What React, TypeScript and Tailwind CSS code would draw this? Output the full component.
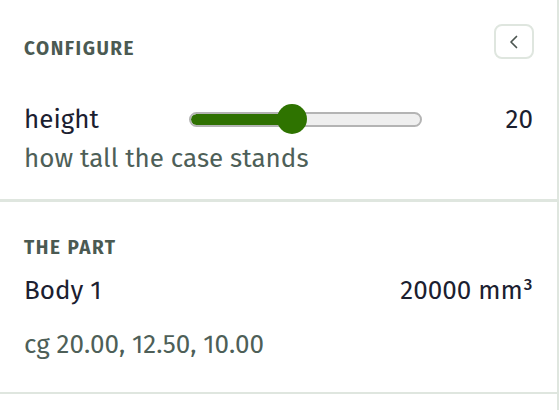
import React from 'react';

const font = { fontFamily: '"Fira Sans", "Open Sans", "Noto Sans", sans-serif' };

const Slider: React.FC<{ pct: number }> = ({ pct }) => {
  return (
    <div className="relative w-[233px] h-[30px] flex items-center">
      <div className="w-full h-[15px] rounded-full bg-[#efefef] border-2 border-[#b4b4b4] overflow-hidden">
        <div className="h-full bg-[#2f7102] rounded-full" style={{ width: `${pct}%` }} />
      </div>
      <div
        className="absolute top-0 w-[30px] h-[30px] -ml-[15px] rounded-full bg-[#2e7300]"
        style={{ left: `${pct}%` }}
      />
    </div>
  );
};

export default function App() {
  return (
    <div style={font} className="w-[559px] h-[410px] bg-white border-r-2 border-[#dfe6df] text-[#1b2030]">
      <section className="px-6 pt-6 pb-6 border-b-[3px] border-[#dfe6df]">
        <div className="flex items-start justify-between">
          <h2 className="mt-[13px] text-[19px] leading-6 font-bold tracking-[0.08em] text-[#4b5a52]">CONFIGURE</h2>
          <button className="w-[40px] h-[35px] -mr-px rounded-lg border-2 border-[#dfe6df] flex items-center justify-center text-[#4b5550]">
            <svg width="14" height="16" viewBox="0 0 14 16" fill="none" stroke="currentColor" strokeWidth="1.7" strokeLinecap="round" strokeLinejoin="round">
              <path d="M9.5 2.5 L4 8 L9.5 13.5" />
            </svg>
          </button>
        </div>
        <div className="mt-[43px] flex items-start">
          <span className="w-[165px] text-[26px] leading-8">height</span>
          <Slider pct={44} />
          <span className="flex-1 text-right text-[26px] leading-8">20</span>
        </div>
        <p className="mt-[7px] text-[26px] leading-8 text-[#4e5f58]">how tall the case stands</p>
      </section>
      <section className="px-6 pt-[34px] pb-[31px] border-b-2 border-[#dfe6df]">
        <h2 className="text-[19px] leading-6 font-bold tracking-[0.08em] text-[#4b5a52]">THE PART</h2>
        <div className="mt-[15px] flex items-baseline justify-between">
          <span className="text-[26px] leading-8">Body 1</span>
          <span className="text-[26px] leading-8">20000 mm³</span>
        </div>
        <p className="mt-[22px] text-[26px] leading-8 text-[#4e5f58]">cg 20.00, 12.50, 10.00</p>
      </section>
    </div>
  );
}
